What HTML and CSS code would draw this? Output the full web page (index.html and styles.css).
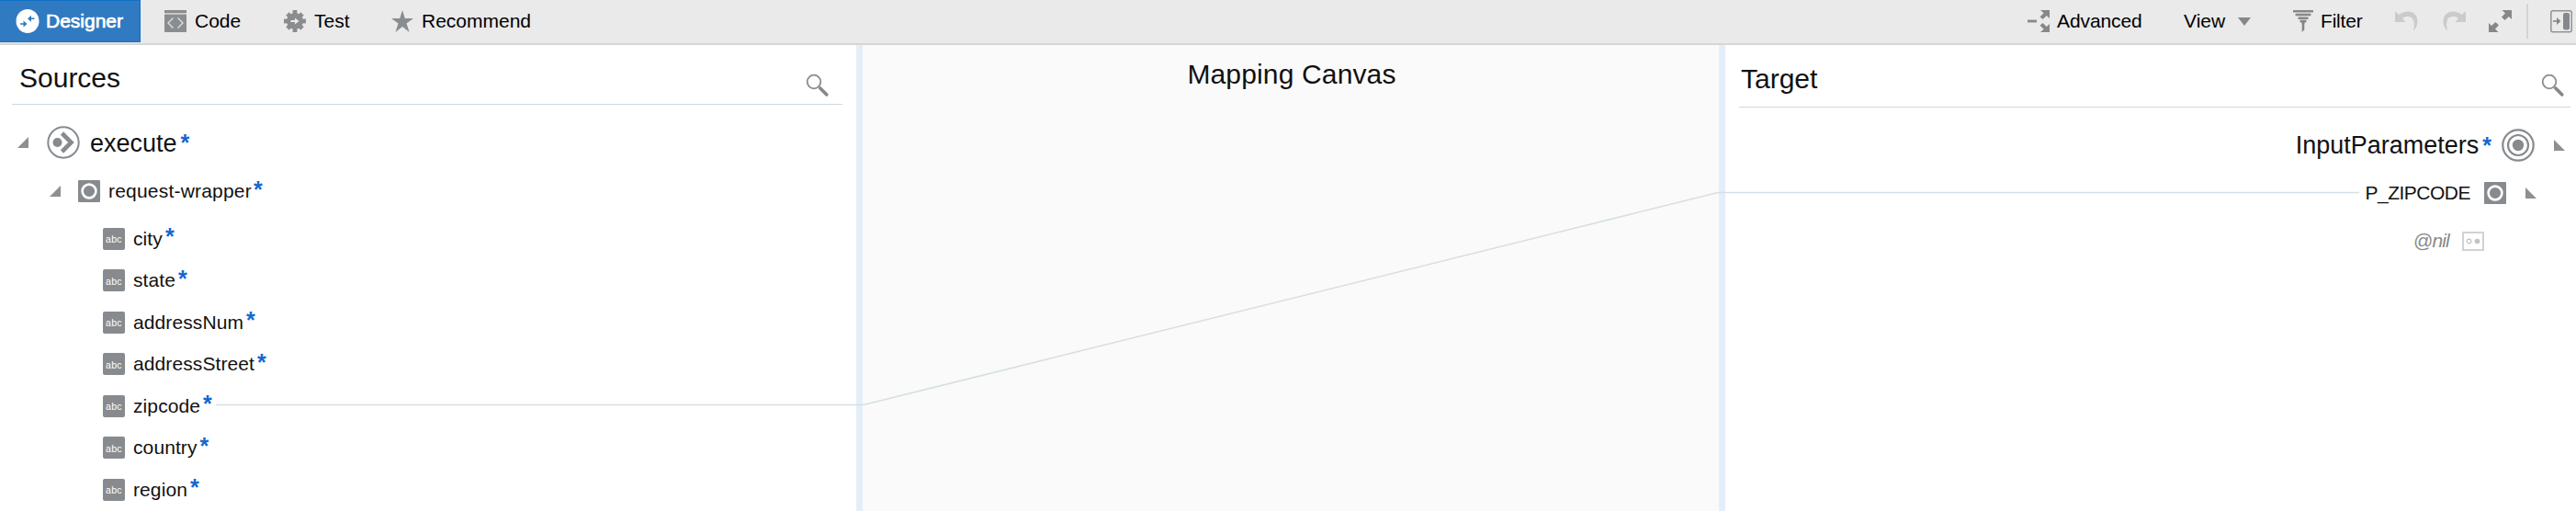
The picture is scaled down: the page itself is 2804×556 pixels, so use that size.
FILE: index.html
```
<!DOCTYPE html>
<html lang="en">
<head>
<meta charset="utf-8">
<title>Mapper</title>
<link rel="stylesheet" href="styles.css">
</head>
<body>
<svg class="defs" width="0" height="0">
  <symbol id="search" viewBox="0 0 26 26"><circle cx="9" cy="9" r="7.3" fill="none" stroke="#8a8d8f" stroke-width="1.8"/><path d="M15.8 16L22.8 23" stroke="#85888a" stroke-width="3.6" stroke-linecap="round"/></symbol>
  <symbol id="element" viewBox="0 0 24 24"><rect width="24" height="24" rx="1" fill="#878b8f"/><circle cx="12" cy="12" r="7.4" fill="none" stroke="#fff" stroke-width="2.6"/></symbol>
  <symbol id="tri-left" viewBox="0 0 12 12"><path d="M12 0V12H0Z" fill="#8f8f8f"/></symbol>
  <symbol id="tri-right" viewBox="0 0 12 12"><path d="M0 0V12H12Z" fill="#8f8f8f"/></symbol>
</svg>

<header class="toolbar">
  <nav class="tabs">
    <a class="tab tab-active">
      <svg width="26" height="26" viewBox="0 0 26 26"><ellipse cx="13" cy="13" rx="12.5" ry="13" fill="#fff"/><path d="M5 16H9M16 10.3H20.5" stroke="#2f7ac1" stroke-width="1.5"/><path d="M8.5 12.5L12.5 16L8.5 19.5ZM17 6.8L13 10.3L17 13.8Z" fill="#2f7ac1"/></svg>
      <span>Designer</span>
    </a>
    <a class="tab tab-code">
      <svg width="24" height="24" viewBox="0 0 24 24"><path d="M0 0H24V3H0ZM0 4.5H24V24H0Z" fill="#8a8d90"/><path d="M0 3.7H24" stroke="#c9cacb" stroke-width="1.3"/><path d="M9.5 8.5L4 14L9.5 19.5M14.5 8.5L20 14L14.5 19.5" fill="none" stroke="#dcdddd" stroke-width="1.4"/></svg>
      <span>Code</span>
    </a>
    <a class="tab tab-test">
      <svg width="24" height="24" viewBox="0 0 24 24"><g fill="#8a8d90"><circle cx="12" cy="12" r="9"/><path d="M9.6 0H14.4V24H9.6Z"/><path d="M0 9.6V14.4H24V9.6Z"/><path d="M9.6 .6H14.4V23.4H9.6Z" transform="rotate(45 12 12)"/><path d="M9.6 .6H14.4V23.4H9.6Z" transform="rotate(-45 12 12)"/></g><path d="M7.5 10.9H12V8.5L16.5 12L12 15.5V13.1H7.5Z" fill="#ebebeb"/></svg>
      <span>Test</span>
    </a>
    <a class="tab tab-recommend">
      <svg width="24" height="24" viewBox="0 0 24 24"><path d="M12 0L14.8 9H24L16.5 14.5L19.6 24L12 18L4.4 24L7.5 14.5L0 9H9.2Z" fill="#8a8d90"/></svg>
      <span>Recommend</span>
    </a>
  </nav>
  <div class="tools">
    <a class="tool tool-advanced">
      <svg width="24" height="24" viewBox="0 0 24 24"><path d="M0 12H10" stroke="#85888b" stroke-width="2.8"/><path d="M14 0H24V9L20.8 6L16.5 10L13.5 7.2L17.7 3.2ZM14 24H24V15L20.8 18L16.5 14L13.5 16.8L17.7 20.8Z" fill="#85888b"/></svg>
      <span>Advanced</span>
    </a>
    <a class="tool tool-view">
      <span>View</span>
      <svg width="14" height="9" viewBox="0 0 14 9"><path d="M0 0H14L7 9Z" fill="#85888b"/></svg>
    </a>
    <a class="tool tool-filter">
      <svg width="22" height="24" viewBox="0 0 22 24"><path d="M0 1.3H22M2.6 5H19.4M5.5 8.7H16.5M7.5 12H14.5" stroke="#85888b" stroke-width="2.6"/><path d="M8.5 12H13.5L12.3 15V21.5L9.7 24V15Z" fill="#85888b"/></svg>
      <span>Filter</span>
    </a>
    <svg class="tool-undo" width="25" height="22" viewBox="0 0 25 22"><path d="M0 0L4 4C12-2 24-1 24.5 11C24.5 16 22 20 20 21C22 14 21 6 14 6C11 6 9.5 6.5 8 8L11.5 12H0Z" fill="#cacbcc"/></svg>
    <svg class="tool-redo" width="25" height="22" viewBox="0 0 25 22"><path d="M0 0L4 4C12-2 24-1 24.5 11C24.5 16 22 20 20 21C22 14 21 6 14 6C11 6 9.5 6.5 8 8L11.5 12H0Z" transform="translate(25 0) scale(-1 1)" fill="#cacbcc"/></svg>
    <svg class="tool-expand" width="25" height="24" viewBox="0 0 25 24"><path d="M14.5 0H25V10L22 7L17.5 11L14 7.5L18 3.5ZM10.5 24H0V14L3 17L7.5 13L11 16.5L7 20.5Z" fill="#85888b"/></svg>
    <i class="tool-divider"></i>
    <svg class="tool-panel" width="24" height="25" viewBox="0 0 24 25"><rect x=".8" y=".8" width="22.4" height="23" rx="2" fill="none" stroke="#909396" stroke-width="1.5"/><rect x="14" y="3" width="7" height="18.5" rx="2" fill="#85888b"/><path d="M3 12H8" fill="none" stroke="#85888b" stroke-width="1.7"/><path d="M7 8L11.5 12L7 16Z" fill="#85888b"/></svg>
  </div>
</header>

<main class="mapper">
  <section class="panel sources">
    <div class="panel-head"><h2>Sources</h2><svg class="search" width="26" height="26"><use href="#search"/></svg></div>
    <ul class="tree">
      <li class="row row-root"><svg width="12" height="12"><use href="#tri-left"/></svg>
        <svg class="root-icon" width="36" height="36" viewBox="0 0 36 36"><circle cx="18" cy="18" r="16.7" fill="none" stroke="#878b8f" stroke-width="2"/><circle cx="11.5" cy="18" r="5" fill="#878b8f"/><path d="M16.5 8L26.5 18L16.5 28" fill="none" stroke="#878b8f" stroke-width="4.6"/></svg>
        <span class="label">execute</span><b class="req">*</b></li>
      <li class="row row-wrapper"><svg width="12" height="12"><use href="#tri-left"/></svg><svg class="node-icon" width="24" height="24"><use href="#element"/></svg><span class="label">request-wrapper</span><b class="req">*</b></li>
      <li class="row leaf"><i class="abc">abc</i><span class="label">city</span><b class="req">*</b></li>
      <li class="row leaf"><i class="abc">abc</i><span class="label">state</span><b class="req">*</b></li>
      <li class="row leaf"><i class="abc">abc</i><span class="label">addressNum</span><b class="req">*</b></li>
      <li class="row leaf"><i class="abc">abc</i><span class="label">addressStreet</span><b class="req">*</b></li>
      <li class="row leaf"><i class="abc">abc</i><span class="label">zipcode</span><b class="req">*</b></li>
      <li class="row leaf"><i class="abc">abc</i><span class="label">country</span><b class="req">*</b></li>
      <li class="row leaf"><i class="abc">abc</i><span class="label">region</span><b class="req">*</b></li>
    </ul>
  </section>
  <section class="canvas"><h2>Mapping Canvas</h2></section>
  <section class="panel target">
    <div class="panel-head"><h2>Target</h2><svg class="search" width="26" height="26"><use href="#search"/></svg></div>
    <ul class="tree">
      <li class="row row-root"><span class="label">InputParameters</span><b class="req">*</b>
        <svg class="root-icon" width="36" height="36" viewBox="0 0 36 36"><g fill="none" stroke="#878b8f" stroke-width="2.2"><circle cx="18" cy="18" r="16.7"/><circle cx="18" cy="18" r="11"/></g><circle cx="18" cy="18" r="6.2" fill="#878b8f"/></svg>
        <svg width="12" height="12"><use href="#tri-right"/></svg></li>
      <li class="row row-zip"><span class="label">P_ZIPCODE</span><svg class="node-icon" width="24" height="24"><use href="#element"/></svg><svg width="12" height="12"><use href="#tri-right"/></svg></li>
      <li class="row row-nil"><span class="label">@nil</span><svg width="24" height="21" viewBox="0 0 24 21"><rect x="1" y="1" width="22" height="19" fill="#fff" stroke="#d0d2d3" stroke-width="2"/><circle cx="7.5" cy="10.5" r="2.3" fill="none" stroke="#c0c2c4" stroke-width="1.2"/><circle cx="16.5" cy="10.5" r="2.8" fill="#c0c2c4"/></svg></li>
    </ul>
  </section>
  <svg class="links" width="2804" height="507" viewBox="0 49 2804 507"><path d="M235 440.5H940L1870 209.5H2568" fill="none" stroke="#d5dfe5" stroke-width="1.5"/></svg>
</main>
</body>
</html>
```
FILE: styles.css
```
* { box-sizing: border-box; }
body { margin: 0; width: 2804px; height: 556px; overflow: hidden; background: #fff; color: #111; font-family: "Liberation Sans", Arial, sans-serif; font-size: 21px; }
svg { display: block; flex: none; }
.defs { position: absolute; }
h2 { margin: 0; font-weight: 400; font-size: 30px; line-height: 36px; white-space: nowrap; }
ul { list-style: none; margin: 0; padding: 0; }

.toolbar { display: flex; justify-content: space-between; height: 49px; background: #eaeaea; border-bottom: 2px solid #d6d6d6; color: #000; }
.tabs, .tools { display: flex; align-items: center; height: 46px; }
.tab, .tool { display: flex; align-items: center; height: 46px; white-space: nowrap; }
.tab-active { width: 153px; padding-left: 17px; gap: 7px; background: #2f7ac1; border: 1px solid #0f70c4; border-left: 0; color: #fff; -webkit-text-stroke: .7px #fff; }
.tab-code { width: 156px; padding-left: 26px; gap: 9px; }
.tab-test { width: 117px; gap: 9px; }
.tab-recommend { gap: 9px; }
.tool-advanced { width: 170px; gap: 8px; letter-spacing: -.1px; }
.tool-view { width: 119px; gap: 14px; }
.tool-filter { width: 111px; gap: 8px; letter-spacing: -.2px; }
.tool-undo { margin-right: 27px; }
.tool-redo { margin-right: 25px; }
.tool-expand { margin-right: 16px; }
.tool-divider { width: 2px; height: 38px; margin-right: 24px; background: #d4d4d4; }
.tool-panel { margin-right: 4px; }

.mapper { position: relative; display: grid; grid-template-columns: 932px 939px 933px; height: 507px; }
.canvas { background: #fafafa; border-left: 7px solid #e4eef9; text-align: center; padding-top: 14px; }
.canvas h2 { padding-left: 2px; letter-spacing: .15px; }
.target { border-left: 7px solid #e4eef9; }
.panel-head { display: flex; justify-content: space-between; border-bottom: 1px solid #ccd7e0; }
.sources .panel-head { height: 65px; margin: 0 15px 0 13px; padding: 18px 14px 0 8px; }
.target .panel-head { height: 68px; margin: 0 6px 0 15px; padding: 19px 6px 0 2px; }
.sources .search { margin-top: 13px; }
.target .search { margin-top: 12px; }
.links { position: absolute; left: 0; top: 0; pointer-events: none; }

.row { display: flex; align-items: center; height: 45.5px; white-space: nowrap; }
.row-root { font-size: 27px; }
.req { color: #1467d0; font-size: 25px; line-height: 24px; margin-left: 4px; }
.abc { display: flex; flex: none; align-items: center; justify-content: center; width: 24px; height: 24px; padding-top: 1px; border-radius: 2px; background: #878b8f; color: #fff; font-size: 10.5px; line-height: 12px; font-style: normal; letter-spacing: .3px; }

.sources .row-root { height: 52px; padding-left: 19px; margin-top: 15px; }
.sources .row-root .label { padding-top: 2px; }
.sources .root-icon { margin: 0 11px 0 20px; }
.row-wrapper { height: 54px; padding-left: 54px; }
.row-wrapper .label { letter-spacing: .2px; }
.row-wrapper .node-icon { margin: 0 9px 0 19px; }
.row-wrapper .req { margin-left: 2px; padding-bottom: 5px; }
.leaf { padding-left: 112px; gap: 9px; letter-spacing: .1px; }
.row-wrapper + .leaf { margin-top: 2px; }
.leaf .req { margin-left: -6px; padding-bottom: 5px; }

.target .row { justify-content: flex-end; }
.target .row-root { height: 52px; margin-top: 15px; padding-right: 12px; }
.target .row-root .label { padding-top: 1px; }
.target .root-icon { margin: 0 21px 0 11px; }
.row-zip { height: 52px; padding-right: 43px; }
.row-zip .label { letter-spacing: -.5px; }
.row-zip .node-icon { margin: 0 21px 0 15px; }
.row-nil { height: 52px; padding-right: 100px; gap: 14px; color: #888; font-style: italic; }
.row-nil .label { letter-spacing: -.8px; }
```
